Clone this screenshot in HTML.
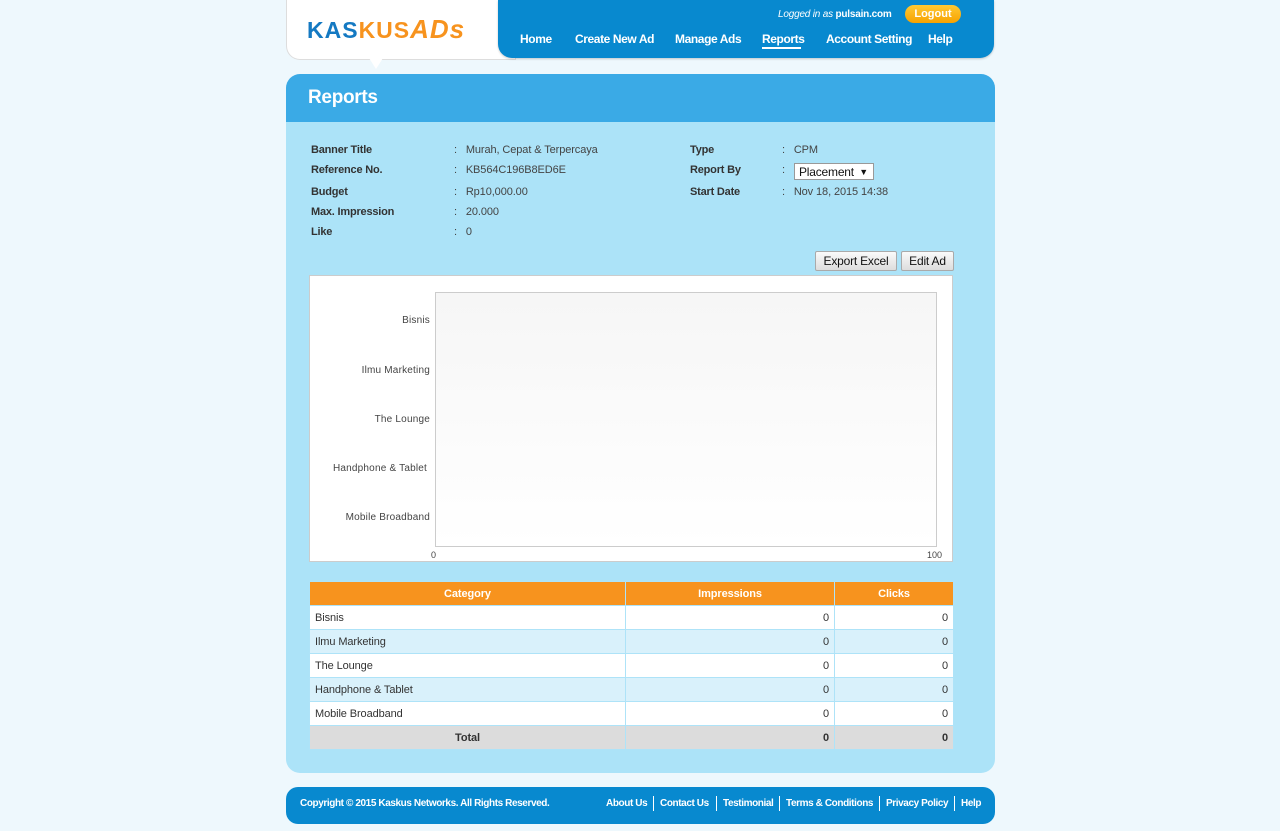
<!DOCTYPE html>
<html><head><meta charset="utf-8"><style>
*{margin:0;padding:0;box-sizing:border-box}
body{width:1280px;height:831px;background:#eef8fd;font-family:"Liberation Sans",Arial,sans-serif;position:relative;overflow:hidden;color:#333}
.abs{position:absolute}
#logo{left:286px;top:0;width:230px;height:60px;background:#fff;border:1px solid #ddd;border-top:none;border-radius:0 0 0 14px}
#tip{left:369px;top:58px;width:0;height:0;border-left:7px solid transparent;border-right:7px solid transparent;border-top:11px solid #fff}
#nav{left:498px;top:0;width:496px;height:58px;background:#0889cf;border-radius:0 0 14px 14px;box-shadow:0 1px 2px rgba(0,0,0,.2)}
.nv{top:32px;color:#fff;font-size:12px;font-weight:bold;letter-spacing:-0.4px;white-space:nowrap}
#logout{left:905px;top:5px;width:56px;height:18px;background:linear-gradient(#ffc933,#f7a200);border-radius:9px;color:#fff;font-size:11px;font-weight:bold;text-align:center;line-height:18px}
#rh{left:286px;top:74px;width:709px;height:48px;background:#3aaae6;border-radius:14px 14px 0 0;color:#fff;font-size:19px;font-weight:bold;padding:13px 22px;letter-spacing:-0.3px}
#body{left:286px;top:122px;width:709px;height:651px;background:#ace3f8;border-radius:0 0 14px 14px}
.lb{font-size:11px;font-weight:bold;color:#333;letter-spacing:-0.2px}
.vl{font-size:11px;color:#444;letter-spacing:-0.1px}
.btn{background:linear-gradient(#fafafa,#ddd);border:1px solid #aaa;border-radius:2px;font-size:12px;color:#111;text-align:center;line-height:18px;height:20px;letter-spacing:-0.2px}
#chart{left:309px;top:275px;width:644px;height:287px;background:#fff;border:1px solid #ccc}
#plot{left:435px;top:292px;width:502px;height:255px;border:1px solid #ccc;background:linear-gradient(#f6f6f6,#fff)}
.cl{font-size:10px;color:#444;text-align:right;width:130px;left:300px;letter-spacing:.2px}
table{position:absolute;left:309px;top:581px;width:645px;border-collapse:collapse;font-size:11px;letter-spacing:-0.1px}
td,th{height:24px;border:1px solid #aee3f8;padding:0 5px}
th{background:#f7931e;color:#fff;font-weight:bold}
tr.a td{background:#fff}tr.b td{background:#d9f1fb}
tr.t td{background:#dcdcdc;font-weight:bold}
.r{text-align:right}
#foot{left:286px;top:787px;width:709px;height:37px;background:#0889cf;border-radius:12px;color:#fff;font-size:10px;font-weight:bold;letter-spacing:-0.4px}
.fl{top:11px;white-space:nowrap}
.sep{top:9px;width:1px;height:15px;background:#fff}
</style></head><body>
<div id="logo" class="abs"><div class="abs" style="left:20px;top:14px;font-size:23px;font-weight:900;letter-spacing:1px;white-space:nowrap"><span style="color:#1479c2">KAS</span><span style="color:#f7931e">KUS</span><span style="color:#f7931e;font-size:26px;font-style:italic">ADs</span></div></div>
<div id="tip" class="abs"></div>
<div id="nav" class="abs"></div>
<div class="abs" style="left:778px;top:9px;color:#fff;font-size:10px;letter-spacing:-0.2px"><i>Logged in as</i> <b>pulsain.com</b></div>
<div id="logout" class="abs">Logout</div>
<div class="abs nv" style="left:520px">Home</div>
<div class="abs nv" style="left:575px">Create New Ad</div>
<div class="abs nv" style="left:675px">Manage Ads</div>
<div class="abs nv" style="left:762px">Reports</div>
<div class="abs" style="left:762px;top:47px;width:39px;height:2px;background:#fff"></div>
<div class="abs nv" style="left:826px">Account Setting</div>
<div class="abs nv" style="left:928px">Help</div>
<div id="rh" class="abs">Reports</div>
<div id="body" class="abs"></div>
<div class="abs lb" style="left:311px;top:144px">Banner Title</div><div class="abs vl" style="left:454px;top:144px">:&nbsp;&nbsp;&nbsp;Murah, Cepat &amp; Terpercaya</div>
<div class="abs lb" style="left:311px;top:164px">Reference No.</div><div class="abs vl" style="left:454px;top:164px">:&nbsp;&nbsp;&nbsp;KB564C196B8ED6E</div>
<div class="abs lb" style="left:311px;top:186px">Budget</div><div class="abs vl" style="left:454px;top:186px">:&nbsp;&nbsp;&nbsp;Rp10,000.00</div>
<div class="abs lb" style="left:311px;top:206px">Max. Impression</div><div class="abs vl" style="left:454px;top:206px">:&nbsp;&nbsp;&nbsp;20.000</div>
<div class="abs lb" style="left:311px;top:226px">Like</div><div class="abs vl" style="left:454px;top:226px">:&nbsp;&nbsp;&nbsp;0</div>
<div class="abs lb" style="left:690px;top:144px">Type</div><div class="abs vl" style="left:782px;top:144px">:&nbsp;&nbsp;&nbsp;CPM</div>
<div class="abs lb" style="left:690px;top:164px">Report By</div><div class="abs vl" style="left:782px;top:164px">:</div>
<div class="abs" style="left:794px;top:163px;width:80px;height:17px;background:#fff;border:1px solid #999;font-size:12px;padding:1px 4px;color:#111;letter-spacing:-0.2px">Placement <span style="font-size:9px;position:absolute;right:5px;top:3px">▼</span></div>
<div class="abs lb" style="left:690px;top:186px">Start Date</div><div class="abs vl" style="left:782px;top:186px">:&nbsp;&nbsp;&nbsp;Nov 18, 2015 14:38</div>
<div class="abs btn" style="left:815px;top:251px;width:82px">Export Excel</div>
<div class="abs btn" style="left:901px;top:251px;width:53px">Edit Ad</div>
<div id="chart" class="abs"></div>
<div id="plot" class="abs"></div>
<div class="abs cl" style="top:315px">Bisnis</div>
<div class="abs cl" style="top:365px">Ilmu Marketing</div>
<div class="abs cl" style="top:414px">The Lounge</div>
<div class="abs cl" style="top:463px;width:127px">Handphone &amp; Tablet</div>
<div class="abs cl" style="top:512px">Mobile Broadband</div>
<div class="abs" style="left:431px;top:550px;font-size:9px;color:#444">0</div>
<div class="abs" style="left:927px;top:550px;font-size:9px;color:#444">100</div>
<table>
<tr><th style="width:316px">Category</th><th style="width:209px">Impressions</th><th>Clicks</th></tr>
<tr class="a"><td>Bisnis</td><td class="r">0</td><td class="r">0</td></tr>
<tr class="b"><td>Ilmu Marketing</td><td class="r">0</td><td class="r">0</td></tr>
<tr class="a"><td>The Lounge</td><td class="r">0</td><td class="r">0</td></tr>
<tr class="b"><td>Handphone &amp; Tablet</td><td class="r">0</td><td class="r">0</td></tr>
<tr class="a"><td>Mobile Broadband</td><td class="r">0</td><td class="r">0</td></tr>
<tr class="t"><td style="text-align:center">Total</td><td class="r">0</td><td class="r">0</td></tr>
</table>
<div id="foot" class="abs">
<div class="abs fl" style="left:14px">Copyright © 2015 Kaskus Networks. All Rights Reserved.</div>
<div class="abs fl" style="left:320px">About Us</div>
<div class="abs sep" style="left:367px"></div>
<div class="abs fl" style="left:374px">Contact Us</div>
<div class="abs sep" style="left:430px"></div>
<div class="abs fl" style="left:437px">Testimonial</div>
<div class="abs sep" style="left:493px"></div>
<div class="abs fl" style="left:500px">Terms &amp; Conditions</div>
<div class="abs sep" style="left:593px"></div>
<div class="abs fl" style="left:600px">Privacy Policy</div>
<div class="abs sep" style="left:668px"></div>
<div class="abs fl" style="left:675px">Help</div>
</div>
</body></html>
